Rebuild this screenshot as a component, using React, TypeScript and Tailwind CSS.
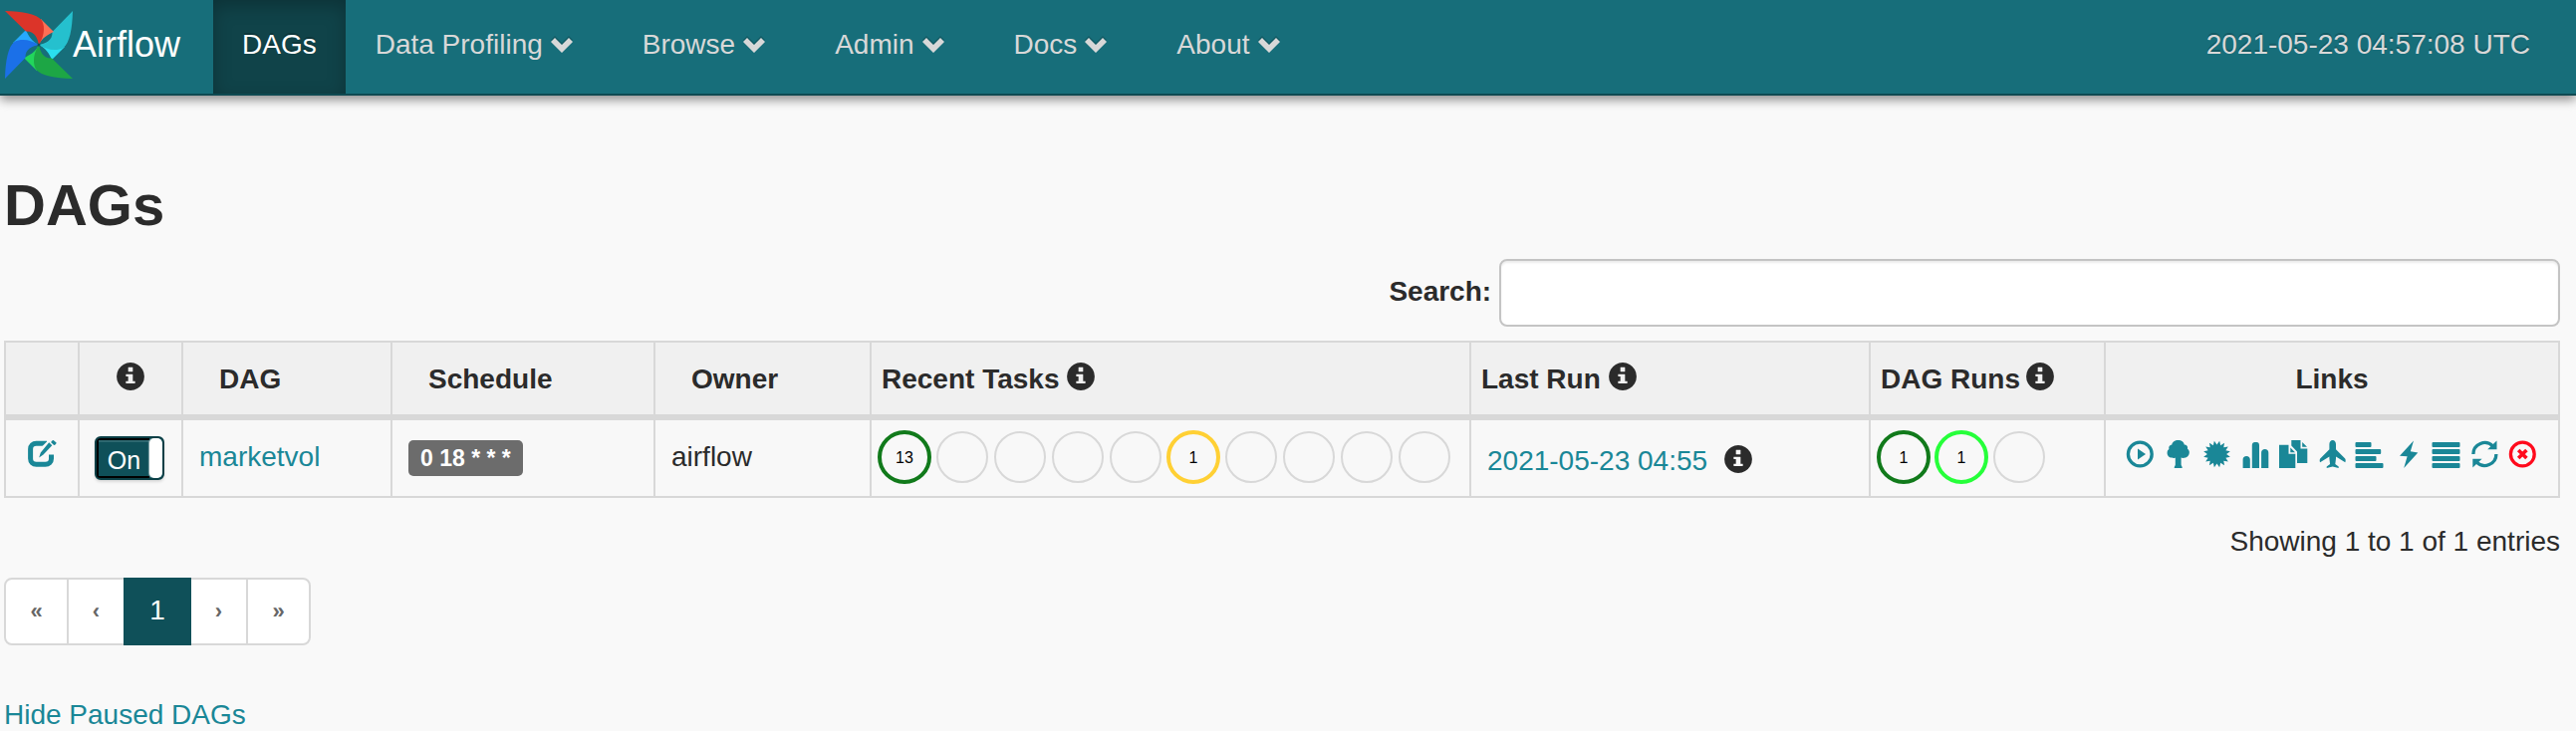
import React from "react";

type IconProps = { children: React.ReactNode; className?: string };

function Icon({ children, className = "" }: IconProps) {
  return (
    <svg viewBox="0 0 28 28" className={`size-7 shrink-0 overflow-visible ${className}`} fill="currentColor" aria-hidden="true">
      {children}
    </svg>
  );
}

function InfoIcon({ className }: { className?: string }) {
  return (
    <svg viewBox="0 0 1200 1200" className={`inline-block size-7 shrink-0 ${className ?? ""}`} fill="currentColor" aria-hidden="true">
      <path
        transform="matrix(1 0 0 -1 0 1200)"
        d="M600 1196q162 0 299 -80t217 -217t80 -299t-80 -299t-217 -217t-299 -80t-299 80t-217 217t-80 299t80 299t217 217t299 80zM675 1000h-150q-10 0 -17.500 -7.500t-7.500 -17.500v-150q0 -10 7.500 -17.500t17.500 -7.500h150q10 0 17.500 7.500t7.500 17.500v150q0 10 -7.500 17.500t-17.500 7.500zM675 700h-250q-10 0 -17.500 -7.500t-7.500 -17.500v-50q0 -10 7.500 -17.500t17.500 -7.500h75v-200h-75q-10 0 -17.500 -7.500t-7.500 -17.500v-50q0 -10 7.500 -17.500t17.500 -7.500h350q10 0 17.500 7.500t7.500 17.500v50q0 10 -7.500 17.500t-17.500 7.500h-75v275q0 10 -7.500 17.500t-17.500 7.500z"
      />
    </svg>
  );
}

function Logo() {
  const blades = [
    { angle: 90, main: "#25c0ce", light: "#2adfee" },
    { angle: 180, main: "#1da645", light: "#22d65c" },
    { angle: 270, main: "#1b70e8", light: "#26a9ff" },
    { angle: 0, main: "#dc3429", light: "#ff6e55" },
  ];
  return (
    <svg viewBox="0 0 68 68" className="size-[68px] shrink-0" aria-hidden="true">
      {blades.map((b) => (
        <g key={b.angle} transform={`rotate(${b.angle} 34 34)`}>
          <path fill={b.light} d="M36 8L49 21C44 23 37 27 34 34L33 20Z" />
          <path fill={b.main} d="M0 0C18 0.500 32 3 37 9.500C41 17 38.500 27 34 34C33 28 30 20 21 20.500Z" />
        </g>
      ))}
      <circle cx="34" cy="34" r="1.500" fill="#10505a" />
    </svg>
  );
}

function ChevronDown() {
  return (
    <svg viewBox="0 0 22 17" className="mr-[10px] ml-2 h-[17px] w-[22px]" aria-hidden="true">
      <polygon points="0,4 4,0 11,7 18,0 22,4 11,15" fill="#125a64" />
      <polygon points="0,6 4,2 11,9 18,2 22,6 11,17" fill="currentColor" />
    </svg>
  );
}

const starPoints = Array.from({ length: 32 }, (_, i) => {
  const radius = i % 2 === 0 ? 13.6 : 9.6;
  const angle = (i * Math.PI) / 16 + Math.PI / 16;
  return `${(14.5 + radius * Math.cos(angle)).toFixed(2)},${(14 + radius * Math.sin(angle)).toFixed(2)}`;
}).join(" ");

const links: { label: string; color?: string; art: React.ReactNode }[] = [
  {
    label: "Trigger Dag",
    art: (
      <>
        <circle cx="14.300" cy="14" r="11.900" fill="none" stroke="currentColor" strokeWidth="3.300" />
        <path d="M12 8.500V19.500L20 14Z" />
      </>
    ),
  },
  {
    label: "Tree View",
    art: (
      <path d="M14.600 0C18 0 20.500 2 20.800 4.600C23.300 4.600 24.600 6.600 24 8.800C25.400 9.800 26 11 25.800 13C25.500 15.500 23.500 17.600 21 17.800C19.500 18 18.300 17.900 17.600 17.500V24.500C17.600 25.500 18.700 26 18.700 28H10.700C10.700 26 11.800 25.500 11.800 24.500V17.500C10.900 18.200 9.500 18.300 8.300 17.600C5.700 17.800 3.700 15.500 3.600 13C3.500 11 4.200 9.700 5.400 9C4.800 6.600 6 4.700 8.300 4.500C8.700 2 11.200 0 14.600 0Z" />
    ),
  },
  { label: "Graph View", art: <polygon points={starPoints} /> },
  {
    label: "Tasks Duration",
    art: (
      <path d="M2.600 28V19.500C2.600 17.500 4 16 6.200 16S9.800 17.500 9.800 19.500V28ZM11.800 28V5C11.800 3.200 13 2 14.500 2H16.400C18 2 19 3.200 19 5V28ZM21.100 28V12.500C21.100 10.500 22.500 9 24.700 9S28.300 10.500 28.300 12.500V28Z" />
    ),
  },
  {
    label: "Task Tries",
    art: (
      <path d="M0 4.700H9.500V13.700H16.300V28H0ZM11.300 7.500L16 12.200H11.300ZM12.300 0H21.500V8.500H28.300V23H18V11.500L12.300 5.500ZM23.200 2L28 6.800H23.200Z" />
    ),
  },
  {
    label: "Landing Times",
    art: (
      <path d="M15.700 0C17.700 0 19 2 19 4V9.300L28.200 18.500C28.800 19.500 28.900 21 28.300 22.300L19 16.600V18.500L18.300 24L21.700 26.500V28L15.700 26.500L9.700 28V26.500L13.100 24L12.400 18.500V16.600L3.100 22.300C2.500 21 2.600 19.500 3.200 18.500L12.400 9.300V4C12.400 2 13.700 0 15.700 0Z" />
    ),
  },
  {
    label: "Gantt View",
    art: (
      <>
        <rect x="0.500" y="2" width="16" height="5" rx="1" />
        <rect x="0.500" y="9" width="25.700" height="5" rx="1" />
        <rect x="0.500" y="16" width="21" height="5" rx="1" />
        <rect x="0.500" y="23" width="28" height="5" rx="1" />
      </>
    ),
  },
  { label: "Code View", art: <polygon points="20,0.500 6,15.700 13.600,16.300 10.200,28 24.300,12.500 16.800,11.300" /> },
  {
    label: "Logs",
    art: (
      <>
        <rect x="0.500" y="2" width="28" height="5" rx="1" />
        <rect x="0.500" y="9" width="28" height="5" rx="1" />
        <rect x="0.500" y="16" width="28" height="5" rx="1" />
        <rect x="0.500" y="23" width="28" height="5" rx="1" />
      </>
    ),
  },
  {
    label: "Refresh",
    art: (
      <>
        <path d="M2.900 14A11.500 11.500 0 0 1 22.500 5.900M25.900 14A11.500 11.500 0 0 1 6.300 22.100" fill="none" stroke="currentColor" strokeWidth="3.300" />
        <path d="M26.500 0.500V9.300H17.200ZM2.300 27.500V18.700H11.600Z" />
      </>
    ),
  },
  {
    label: "Delete Dag",
    color: "text-[#ff0a1c]",
    art: (
      <>
        <circle cx="14.300" cy="14" r="11.900" fill="none" stroke="currentColor" strokeWidth="3.300" />
        <path d="M10.200 9.900L18.400 18.100M18.400 9.900L10.200 18.100" stroke="currentColor" strokeWidth="3.600" />
      </>
    ),
  },
];

type Status = { count?: number; color?: string };

const recentTasks: Status[] = [
  { count: 13, color: "#117a1b" },
  {},
  {},
  {},
  {},
  { count: 1, color: "#ffd034" },
  {},
  {},
  {},
  {},
];

const dagRuns: Status[] = [{ count: 1, color: "#117a1b" }, { count: 1, color: "#26ff3a" }, {}];

function StatusCircles({ items }: { items: Status[] }) {
  return (
    <div className="flex gap-1 pb-[2px] pl-[6px]">
      {items.map((s, i) => (
        <svg key={i} viewBox="0 0 54 54" className="size-[54px] shrink-0">
          <circle cx="27" cy="27" r="25" fill="none" stroke={s.color ?? "#d8d8d8"} strokeWidth={s.color ? 4 : 2} />
          {s.count !== undefined && (
            <text x="27" y="33" textAnchor="middle" fontSize="16" fill="#000">
              {s.count}
            </text>
          )}
        </svg>
      ))}
    </div>
  );
}

const menus = ["Data Profiling", "Browse", "Admin", "Docs", "About"];

const th = "h-[78px] border-b-6 border-l-2 border-[#d8d8d8] bg-[#f0f0f0] pt-[2px] font-bold whitespace-nowrap";
const td = "h-[78px] border-b-2 border-l-2 border-[#d8d8d8] bg-[#f8f8f8] whitespace-nowrap";
const page = "flex h-[68px] items-center justify-center border-2 border-[#d8d8d8] bg-white text-[22px] font-bold text-[#666]";

export default function App() {
  return (
    <div className="min-h-screen bg-[#f9f9f9] font-['Liberation_Sans',Arial,sans-serif] text-[28px] leading-8 text-[#2b2b2b]">
      <nav className="flex h-24 items-stretch border-b-2 border-[#0f4a52] bg-[#176e7a] whitespace-nowrap text-[#d8d8d8] shadow-[0_4px_10px_rgba(0,0,0,0.45)] [text-shadow:0_-2px_0_rgba(0,0,0,0.2)]">
        <a href="#" className="flex w-[214px] shrink-0 items-center pb-1 pl-[5px] text-[36px] text-white [text-shadow:none]">
          <Logo />
          <span>Airflow</span>
        </a>
        <a href="#" className="flex items-center bg-[#104349] px-[29px] pb-[5px] text-white shadow-[inset_0_6px_18px_rgba(0,0,0,0.25)]">
          DAGs
        </a>
        {menus.map((m) => (
          <button key={m} type="button" className="flex items-center px-[30px] pb-[5px]">
            {m}
            <ChevronDown />
          </button>
        ))}
        <span className="ml-auto flex items-center pr-[46px] pb-[5px]">2021-05-23 04:57:08 UTC</span>
      </nav>

      <main className="pr-4 pl-1">
        <h1 className="pt-[78px] text-[58px] leading-[64px] font-bold">DAGs</h1>

        <div className="mt-[22px] flex items-center justify-end gap-2">
          <label htmlFor="search" className="pb-[2px] font-bold">
            Search:
          </label>
          <input
            id="search"
            type="search"
            className="h-[68px] w-[41.500%] rounded-lg border-2 border-[#c4c4c4] bg-white px-6 shadow-[inset_0_2px_2px_rgba(0,0,0,0.075)] outline-none"
          />
        </div>

        <table className="mt-[14px] w-full table-fixed border-separate border-spacing-0 border-t-2 border-r-2 border-[#d8d8d8]">
          <colgroup>
            <col className="w-[74px]" />
            <col className="w-[104px]" />
            <col className="w-[210px]" />
            <col className="w-[264px]" />
            <col className="w-[217px]" />
            <col className="w-[602px]" />
            <col className="w-[401px]" />
            <col className="w-[236px]" />
            <col />
          </colgroup>
          <thead>
            <tr>
              <th className={th} />
              <th className={th}>
                <InfoIcon className="mx-auto mb-[6px] block" />
              </th>
              <th className={`${th} pl-9 text-left`}>DAG</th>
              <th className={`${th} pl-9 text-left`}>Schedule</th>
              <th className={`${th} pl-9 text-left`}>Owner</th>
              <th className={`${th} pl-[10px]`}>
                <span className="flex items-center gap-2">
                  Recent Tasks <InfoIcon className="mb-[6px]" />
                </span>
              </th>
              <th className={`${th} pl-[10px]`}>
                <span className="flex items-center gap-2">
                  Last Run <InfoIcon className="mb-[6px]" />
                </span>
              </th>
              <th className={`${th} pl-[10px]`}>
                <span className="flex items-center gap-[6px]">
                  DAG Runs <InfoIcon className="mb-[6px]" />
                </span>
              </th>
              <th className={`${th} text-center`}>Links</th>
            </tr>
          </thead>
          <tbody>
            <tr>
              <td className={td}>
                <a href="#" aria-label="Edit" className="flex pb-2 pl-[22px] text-[#1a8797]">
                  <Icon>
                    <path
                      d="M19 3.300H8.500C5 3.300 2.600 5.500 2.600 9V18.500C2.600 22 5 24.300 8.500 24.300H17.500C21 24.300 23.500 22 23.500 18.500V14.500"
                      fill="none"
                      stroke="currentColor"
                      strokeWidth="5"
                    />
                    <path d="M21.500 -1L11 9.500L9 19L28 6Z" fill="#f8f8f8" />
                    <path d="M21.200 2.200L24.300 5.300L15.500 14.500L11.200 17.500L12.800 12.500ZM25.600 0L28.600 2.500C28.800 3.300 27.200 5.200 26.200 5L23.200 2.200C23.400 1.200 24.600 -0.100 25.600 0Z" />
                  </Icon>
                </a>
              </td>
              <td className={td}>
                <label className="ml-[15px] flex h-11 w-[70px] items-stretch overflow-hidden rounded-[6px] border-2 border-[#0b3f46] bg-[#0f5059] text-[25px] leading-6 text-white shadow-[0_2px_3px_rgba(0,0,0,0.12)]">
                  <input type="checkbox" defaultChecked className="sr-only" aria-label="Toggle marketvol" />
                  <span className="flex flex-1 items-center justify-center pt-1 pl-[2px] shadow-[inset_2px_2px_0_#000,inset_0_-2px_0_#000,inset_0_4px_0_#2d6870]">
                    On
                  </span>
                  <span className="w-[13px] rounded-[5px] bg-white shadow-[-1px_0_1px_rgba(255,255,255,0.5)]" />
                </label>
              </td>
              <td className={`${td} pb-[2px] pl-4`}>
                <a href="#" className="text-[#1a8797]">
                  marketvol
                </a>
              </td>
              <td className={`${td} pl-4`}>
                <a href="#" className="inline-flex h-9 items-center rounded-[5px] bg-[#6c6c6c] px-3 text-[23px] font-bold text-white">
                  0 18 * * *
                </a>
              </td>
              <td className={`${td} pb-[2px] pl-4`}>airflow</td>
              <td className={td}>
                <StatusCircles items={recentTasks} />
              </td>
              <td className={`${td} pt-[5px] pl-4`}>
                <span className="flex items-center gap-[17px]">
                  <a href="#" className="text-[#1a8797]">
                    2021-05-23 04:55
                  </a>
                  <InfoIcon className="mb-1" />
                </span>
              </td>
              <td className={td}>
                <StatusCircles items={dagRuns} />
              </td>
              <td className={`${td} pb-2 pl-5`}>
                <div className="flex w-[412px] justify-between">
                  {links.map((l) => (
                    <a key={l.label} href="#" aria-label={l.label} className={l.color ?? "text-[#1a8797]"}>
                      <Icon>{l.art}</Icon>
                    </a>
                  ))}
                </div>
              </td>
            </tr>
          </tbody>
        </table>

        <p className="mt-7 text-right">Showing 1 to 1 of 1 entries</p>

        <div className="mt-5 flex">
          <button type="button" className={`${page} w-[65px] rounded-l-lg`}>
            «
          </button>
          <button type="button" className={`${page} w-[55px] border-r-0 border-l-0`}>
            ‹
          </button>
          <button type="button" className="flex h-[68px] w-[68px] items-center justify-center bg-[#0f5059] pb-[2px] text-white">
            1
          </button>
          <button type="button" className={`${page} w-[55px] border-r-0 border-l-0`}>
            ›
          </button>
          <button type="button" className={`${page} w-[65px] rounded-r-lg`}>
            »
          </button>
        </div>

        <a href="#" className="mt-[54px] block w-fit text-[#1a8797]">
          Hide Paused DAGs
        </a>
      </main>
    </div>
  );
}
